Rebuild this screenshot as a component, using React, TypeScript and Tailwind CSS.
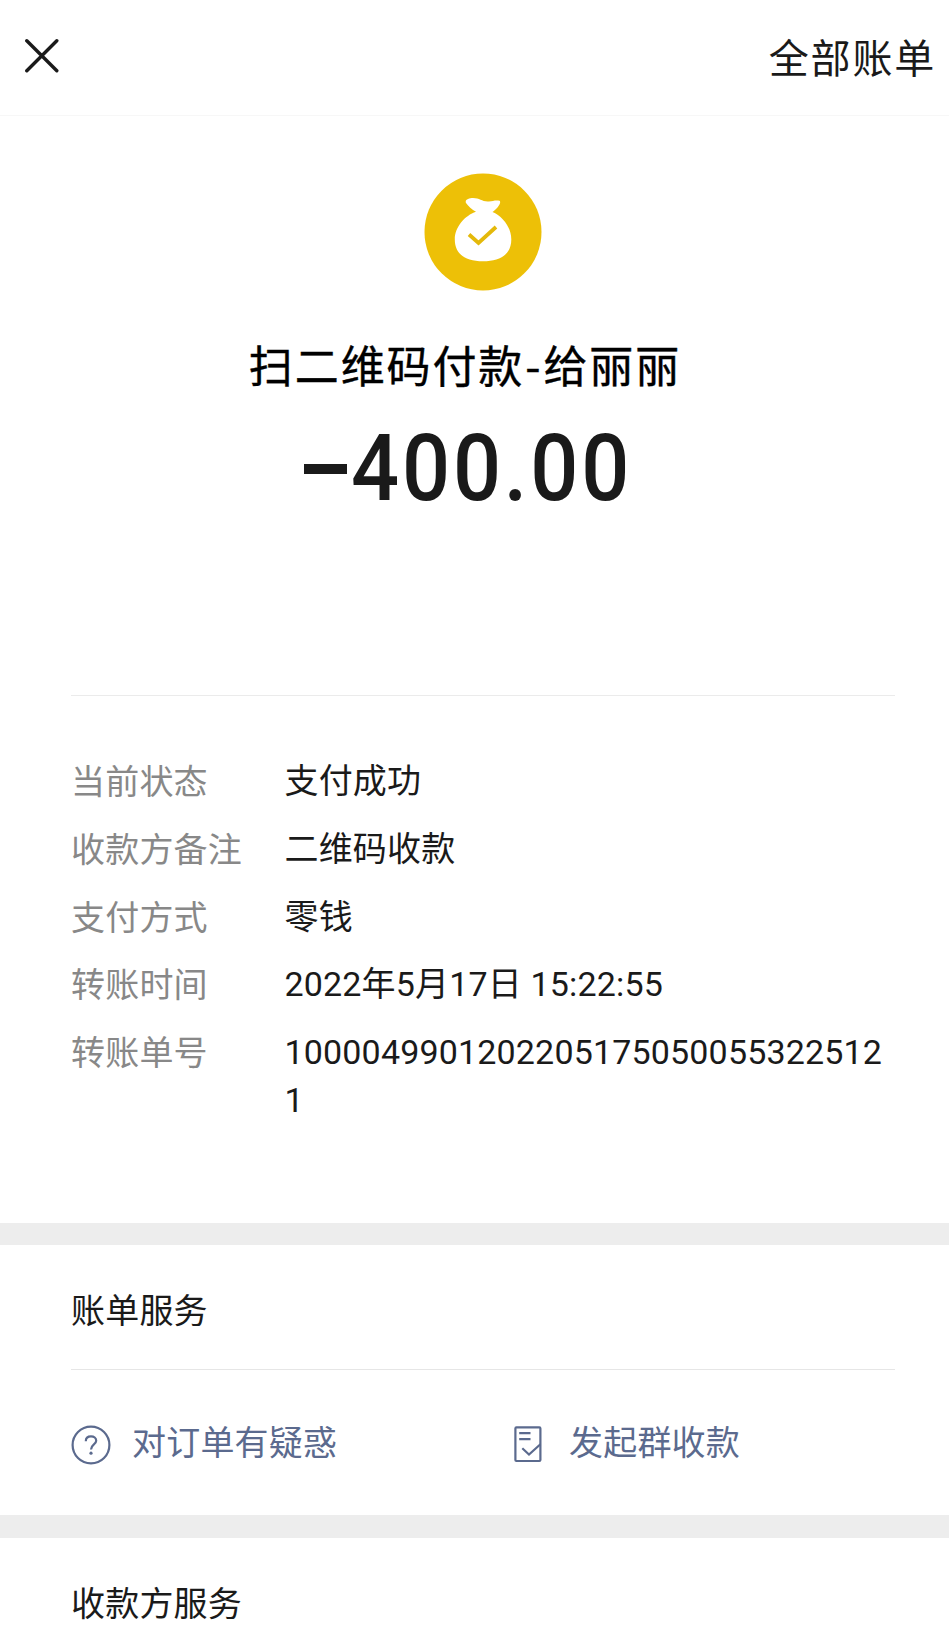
import React from "react";

const DETAILS = [
  { label: "当前状态", value: "支付成功" },
  { label: "收款方备注", value: "二维码收款" },
  { label: "支付方式", value: "零钱" },
  { label: "转账时间", value: "2022年5月17日 15:22:55" },
  { label: "转账单号", value: "10000499012022051750500553225121" },
];

const CloseIcon = () => (
  <svg width="34" height="34" viewBox="0 0 34 34" fill="none" stroke="#1a1a1a" strokeWidth="3.4" strokeLinecap="round">
    <path d="M1.8 1.8 31.8 31.8M31.8 1.8 1.8 31.8" />
  </svg>
);

const MoneyBagIcon = () => (
  <svg width="118" height="118" viewBox="0 0 118 118" fill="none">
    <circle cx="59" cy="59" r="58.5" fill="#edc007" />
    <path
      fill="#fff"
      d="M52 38.8C48 36.8 44 33 42 30C40.5 26.5 45 25 49 25C56 25 58 29 65 28.4C69 28 72 26.8 75.5 27.8C78 29.5 73 35.8 68.5 39C78 42.8 87.3 54 87.3 66.5C87.3 81.5 76 88.3 59 88.3C42 88.3 30.8 81.5 30.8 66.5C30.8 54 41 42.5 52 38.8Z"
    />
    <path d="M45 61.5 54.5 70 72 54" stroke="#e4b90a" strokeWidth="3.8" />
  </svg>
);

const QuestionIcon = () => (
  <svg width="40" height="40" viewBox="0 0 40 40" fill="none" stroke="#5b6a8e" strokeWidth="2.2">
    <circle cx="20" cy="20" r="18.4" />
    <path d="M14.8 16.2C14.8 13 17 11.4 20 11.4C23 11.4 25.2 13.1 25.2 15.8C25.2 19.6 20 19.4 20 24.6" />
    <circle cx="20" cy="28.2" r="1.6" fill="#5b6a8e" stroke="none" />
  </svg>
);

const BillIcon = () => (
  <svg width="28" height="37" viewBox="0 0 28 37" fill="none" stroke="#5b6a8e" strokeWidth="2.2">
    <rect x="1.4" y="1.4" width="25" height="33.6" rx="1" />
    <path d="M5.2 7.2H16.5M5.2 13.2H16.5M8.3 22.3 15 28.5 26.4 18.3" />
  </svg>
);

export default function App() {
  return (
    <div className="w-[949px] h-[1628px] overflow-hidden flex flex-col bg-white text-[#1a1a1a] text-[34px] tracking-[0.2px] font-['Roboto','Noto_Sans_CJK_SC',sans-serif]">
      {/* Top bar */}
      <header className="h-[116px] shrink-0 flex items-start justify-between pl-[25px] pr-[13px] pt-[30px] border-b border-[#f7f7f7]">
        <div className="pt-[9px]">
          <CloseIcon />
        </div>
        <span className="pt-[1px] text-[40px] leading-[58px] tracking-[1.8px]">全部账单</span>
      </header>

      {/* Payee and amount */}
      <section className="h-[579px] shrink-0 flex flex-col items-center pt-[57px]">
        <div className="ml-[17px]">
          <MoneyBagIcon />
        </div>
        <h1 className="mt-[41px] mr-[19px] text-[44px] leading-[64px] tracking-[1.9px] text-black font-normal font-['Noto_Sans_CJK_SC',sans-serif] [-webkit-text-stroke:0.4px_#000]">
          扫二维码付款<span className="mx-[1px]">-</span>给丽丽
        </h1>
        <div className="mt-[27px] ml-[304px] self-start flex items-center text-[92px] leading-[92px] font-medium tracking-[3.1px]">
          <span className="w-[43px] h-[10px] mr-[4px] bg-[#1a1a1a]" />
          <span className="origin-left scale-x-[0.92]">400.00</span>
        </div>
      </section>

      {/* Details */}
      <section className="h-[528px] shrink-0 ml-[71px] mr-[54px] pt-[62px] border-t border-[#ebebeb] flex flex-col gap-[20px]">
        {DETAILS.map(({ label, value }) => (
          <div key={label} className="flex leading-[47.8px]">
            <span className="w-[213.5px] shrink-0 pt-[1px] -mb-[1px] text-[#888]">{label}</span>
            <span className="w-[610px] break-all tracking-[0.17px]">{value}</span>
          </div>
        ))}
      </section>

      <div className="h-[22px] shrink-0 bg-[#ededed]" />

      {/* Bill services */}
      <section className="h-[270px] shrink-0 ml-[71px] mr-[54px]">
        <div className="h-[125px] flex items-center pt-[8px] border-b border-[#e6e6e6]">账单服务</div>
        <div className="h-[145px] flex items-center pt-[4px] text-[#5b6a8e]">
          <div className="w-[443px] flex items-center gap-[21px]">
            <QuestionIcon />
            <span className="pb-[2px]">对订单有疑惑</span>
          </div>
          <div className="flex items-center gap-[27px]">
            <BillIcon />
            <span className="pb-[2px]">发起群收款</span>
          </div>
        </div>
      </section>

      <div className="h-[23px] shrink-0 bg-[#ededed]" />

      <section className="ml-[71px] pt-[41px] leading-[50px]">收款方服务</section>
    </div>
  );
}
